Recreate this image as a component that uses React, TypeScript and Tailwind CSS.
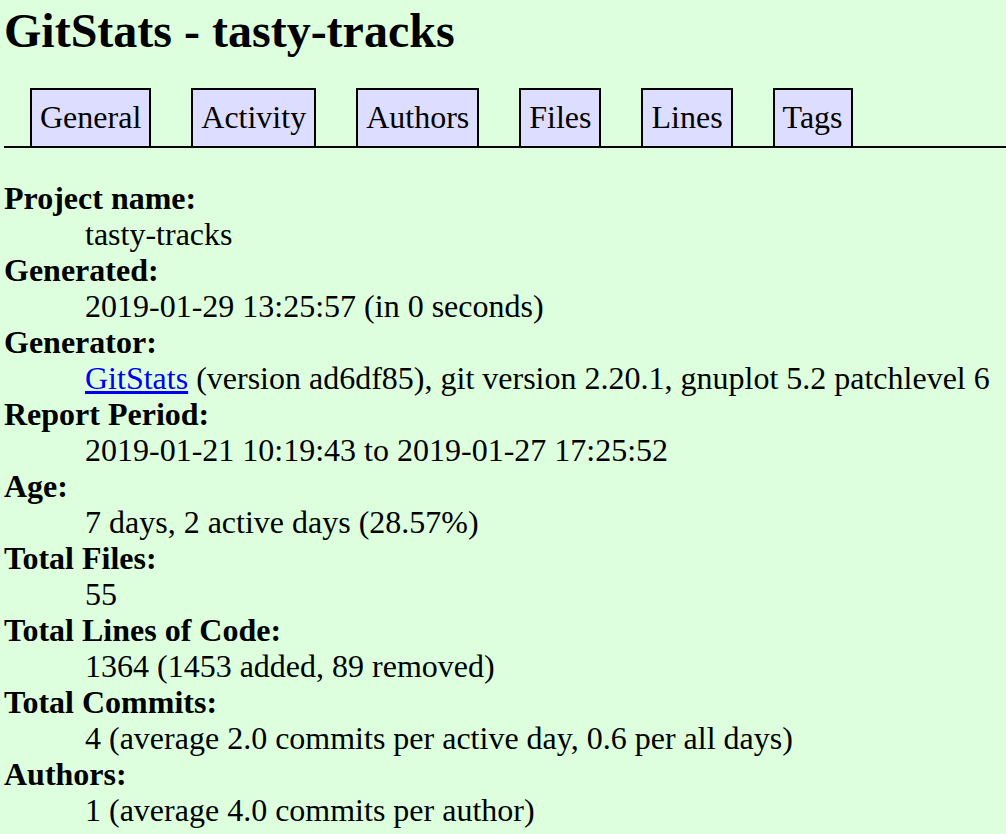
const tabs = ['General', 'Activity', 'Authors', 'Files', 'Lines', 'Tags']

const rows: { label: string; value: React.ReactNode }[] = [
  { label: 'Project name', value: 'tasty-tracks' },
  { label: 'Generated', value: '2019-01-29 13:25:57 (in 0 seconds)' },
  {
    label: 'Generator',
    value: (
      <>
        <a href="#" className="text-[#0000ee] underline">GitStats</a> (version ad6df85), git version 2.20.1, gnuplot 5.2 patchlevel 6
      </>
    ),
  },
  { label: 'Report Period', value: '2019-01-21 10:19:43 to 2019-01-27 17:25:52' },
  { label: 'Age', value: '7 days, 2 active days (28.57%)' },
  { label: 'Total Files', value: '55' },
  { label: 'Total Lines of Code', value: '1364 (1453 added, 89 removed)' },
  { label: 'Total Commits', value: '4 (average 2.0 commits per active day, 0.6 per all days)' },
  { label: 'Authors', value: '1 (average 4.0 commits per author)' },
]

export default function App() {
  return (
    <div className="min-h-screen bg-[#ddffdd] text-black pl-[4px] font-['Liberation_Serif','Times_New_Roman',serif] text-[32px] leading-[36px] overflow-hidden">
      <h1 className="pt-[3px] text-[48px] leading-[55px] font-bold whitespace-nowrap">GitStats - tasty-tracks</h1>

      <div className="h-[90px] flex items-end border-b-2 border-black pl-[26px]">
        {tabs.map((t) => (
          <a
            key={t}
            href="#"
            className="mr-[40px] border-2 border-b-0 border-black bg-[#ddddff] px-[8px] pt-[9px] pb-[11px] whitespace-nowrap"
          >
            {t}
          </a>
        ))}
      </div>

      <dl className="mt-[32px]">
        {rows.map((r) => (
          <div key={r.label}>
            <dt className="font-bold">{r.label}:</dt>
            <dd className="ml-[81px] whitespace-nowrap">{r.value}</dd>
          </div>
        ))}
      </dl>
    </div>
  )
}
